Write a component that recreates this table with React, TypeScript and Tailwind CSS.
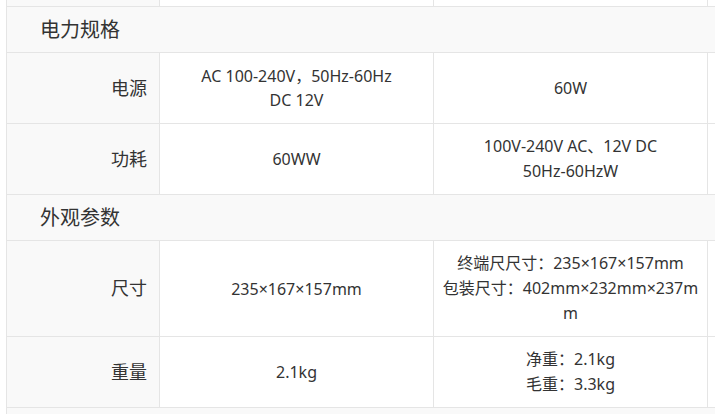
const FONT = 'font-["Noto_Sans","Noto_Sans_CJK_SC",sans-serif]'

type Row = { label: string; a: string[]; b: string[]; h: string }

const POWER: Row[] = [
  { label: '电源', a: ['AC 100-240V，50Hz-60Hz', 'DC 12V'], b: ['60W'], h: 'h-[71px]' },
  { label: '功耗', a: ['60WW'], b: ['100V-240V AC、12V DC', '50Hz-60HzW'], h: 'h-[71px]' },
]

const LOOKS: Row[] = [
  {
    label: '尺寸',
    a: ['235×167×157mm'],
    b: ['终端尺尺寸：235×167×157mm', '包装尺寸：402mm×232mm×237mm'],
    h: 'h-[96px]',
  },
  { label: '重量', a: ['2.1kg'], b: ['净重：2.1kg', '毛重：3.3kg'], h: 'h-[71px]' },
]

function Section({ title }: { title: string }) {
  return (
    <div className="flex h-[46px] items-center border-b border-[#e5e5e5] bg-[#f9f9f9] pl-[33px] text-[20px] text-[#333]">
      {title}
    </div>
  )
}

function SpecRow({ row }: { row: Row }) {
  return (
    <div className={`flex ${row.h} border-b border-[#e5e5e5]`}>
      <div className="flex w-[153px] shrink-0 items-center justify-end border-r border-[#e5e5e5] bg-[#f9f9f9] pr-[12px] text-[18px] text-[#333]">
        {row.label}
      </div>
      <div className="flex w-[274px] shrink-0 flex-col items-center justify-center border-r border-[#e5e5e5] px-[8px] text-center text-[16px] leading-[24px] text-[#333]">
        {row.a.map((line, i) => (
          <span key={i} className="block break-all">{line}</span>
        ))}
      </div>
      <div className="flex w-[274px] shrink-0 flex-col items-center justify-center border-r border-[#e5e5e5] px-[8px] text-center text-[16px] leading-[25px] text-[#333]">
        {row.b.map((line, i) => (
          <span key={i} className="block w-full break-all">{line}</span>
        ))}
      </div>
      <div className="w-[274px] shrink-0 border-r border-[#e5e5e5]" />
    </div>
  )
}

export default function App() {
  return (
    <div className={`h-[414px] w-[715px] overflow-hidden bg-white ${FONT}`}>
      <div className="ml-[6px] w-[1000px] border-l border-[#e5e5e5]">
        <div className="flex h-[7px] border-b border-[#e5e5e5]">
          <div className="w-[153px] shrink-0 border-r border-[#e5e5e5] bg-[#f9f9f9]" />
          <div className="w-[274px] shrink-0 border-r border-[#e5e5e5]" />
          <div className="w-[274px] shrink-0 border-r border-[#e5e5e5]" />
          <div className="w-[274px] shrink-0 border-r border-[#e5e5e5]" />
        </div>
        <Section title="电力规格" />
        {POWER.map((r) => (
          <SpecRow key={r.label} row={r} />
        ))}
        <Section title="外观参数" />
        {LOOKS.map((r) => (
          <SpecRow key={r.label} row={r} />
        ))}
        <div className="h-[40px] bg-[#f9f9f9]" />
      </div>
    </div>
  )
}
